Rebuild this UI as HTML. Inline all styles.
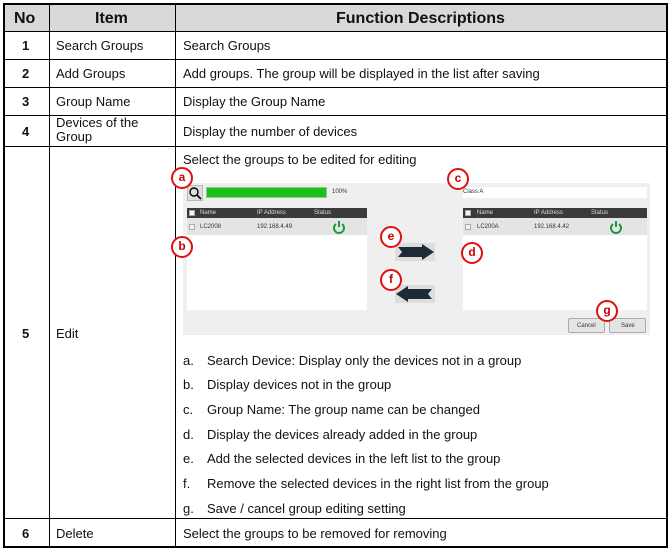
<!DOCTYPE html>
<html><head><style>
*{margin:0;padding:0;box-sizing:border-box}
body{width:672px;height:553px;background:#fff;font-family:"Liberation Sans",Arial,sans-serif;color:#111;position:relative;overflow:hidden}
.a{position:absolute}
.h{background:#000}
.t{font-size:13px;position:absolute;white-space:nowrap}
.b{font-weight:bold}
.c{position:absolute;width:22px;height:22px;border:2px solid #e01010;border-radius:50%;background:#fff;color:#c00;font-weight:bold;font-size:12px;text-align:center;line-height:17px}
.s{font-size:6px;color:#333;position:absolute;white-space:nowrap}
.k{position:absolute;width:6px;height:6px;border:1px solid #aaa;background:#f4f4f4}
</style></head><body>
<div class="a" style="left:3px;top:4px;width:665px;height:27px;background:#d9d9d9"></div>
<div class="a h" style="left:3px;top:3px;width:665px;height:2px"></div>
<div class="a h" style="left:3px;top:31px;width:665px;height:1px"></div>
<div class="a h" style="left:3px;top:59px;width:665px;height:1px"></div>
<div class="a h" style="left:3px;top:87px;width:665px;height:1px"></div>
<div class="a h" style="left:3px;top:115px;width:665px;height:1px"></div>
<div class="a h" style="left:3px;top:146px;width:665px;height:1px"></div>
<div class="a h" style="left:3px;top:518px;width:665px;height:1px"></div>
<div class="a h" style="left:3px;top:546px;width:665px;height:2px"></div>
<div class="a h" style="left:3px;top:3px;width:2px;height:545px"></div>
<div class="a h" style="left:49px;top:3px;width:1px;height:545px"></div>
<div class="a h" style="left:175px;top:3px;width:1px;height:545px"></div>
<div class="a h" style="left:666px;top:3px;width:2px;height:545px"></div>

<div class="t b" style="left:14px;top:10px;font-size:16px">No</div>
<div class="t b" style="left:95px;top:10px;font-size:16px">Item</div>
<div class="t b" style="left:336px;top:10px;font-size:16px">Function Descriptions</div>

<div class="t b" style="left:22px;top:38px">1</div>
<div class="t b" style="left:22px;top:66px">2</div>
<div class="t b" style="left:22px;top:94px">3</div>
<div class="t b" style="left:22px;top:124px">4</div>
<div class="t b" style="left:22px;top:326px">5</div>
<div class="t b" style="left:22px;top:526px">6</div>

<div class="t" style="left:56px;top:38px">Search Groups</div>
<div class="t" style="left:56px;top:66px">Add Groups</div>
<div class="t" style="left:56px;top:94px">Group Name</div>
<div class="t" style="left:56px;top:116px;line-height:14px">Devices of the<br>Group</div>
<div class="t" style="left:56px;top:326px">Edit</div>
<div class="t" style="left:56px;top:526px">Delete</div>

<div class="t" style="left:183px;top:38px">Search Groups</div>
<div class="t" style="left:183px;top:66px">Add groups. The group will be displayed in the list after saving</div>
<div class="t" style="left:183px;top:94px">Display the Group Name</div>
<div class="t" style="left:183px;top:124px">Display the number of devices</div>
<div class="t" style="left:183px;top:152px">Select the groups to be edited for editing</div>
<div class="t" style="left:183px;top:526px">Select the groups to be removed for removing</div>

<div class="a" style="left:183px;top:183px;width:467px;height:152px;background:#efefef"></div>
<div class="a" style="left:187px;top:185px;width:16px;height:16px;background:#ddd;border:1px solid #bbb"></div>
<svg class="a" style="left:188px;top:186px" width="14" height="14"><circle cx="6" cy="6" r="4" fill="none" stroke="#000" stroke-width="1.4"/><line x1="9" y1="9" x2="13" y2="13" stroke="#000" stroke-width="1.6"/></svg>
<div class="a" style="left:206px;top:187px;width:121px;height:11px;background:#1cc01c;border:1px solid #8c8"></div>
<div class="s" style="left:332px;top:189px">100%</div>
<div class="a" style="left:463px;top:187px;width:184px;height:11px;background:#fff"></div>
<div class="s" style="left:463px;top:189px">Class A</div>

<div class="a" style="left:187px;top:208px;width:180px;height:102px;background:#fff"></div>
<div class="a" style="left:187px;top:208px;width:180px;height:10px;background:#3a3a3a"></div>
<div class="a" style="left:187px;top:218px;width:180px;height:17px;background:#e4e4e4"></div>
<div class="k" style="left:189px;top:210px"></div>
<div class="k" style="left:189px;top:224px"></div>
<div class="s" style="left:200px;top:210px;color:#ddd">Name</div>
<div class="s" style="left:257px;top:210px;color:#ddd">IP Address</div>
<div class="s" style="left:314px;top:210px;color:#ddd">Status</div>
<div class="s" style="left:200px;top:224px">LC2008</div>
<div class="s" style="left:257px;top:224px">192.168.4.49</div>
<svg class="a" style="left:332px;top:220px" width="14" height="14"><path d="M4 4 A5 5 0 1 0 10 4" fill="none" stroke="#1a9a3a" stroke-width="2"/><line x1="7" y1="1" x2="7" y2="7" stroke="#1a9a3a" stroke-width="2"/></svg>

<div class="a" style="left:463px;top:208px;width:184px;height:102px;background:#fff"></div>
<div class="a" style="left:463px;top:208px;width:184px;height:10px;background:#3a3a3a"></div>
<div class="a" style="left:463px;top:218px;width:184px;height:17px;background:#e4e4e4"></div>
<div class="k" style="left:465px;top:210px"></div>
<div class="k" style="left:465px;top:224px"></div>
<div class="s" style="left:477px;top:210px;color:#ddd">Name</div>
<div class="s" style="left:534px;top:210px;color:#ddd">IP Address</div>
<div class="s" style="left:591px;top:210px;color:#ddd">Status</div>
<div class="s" style="left:477px;top:224px">LC200A</div>
<div class="s" style="left:534px;top:224px">192.168.4.42</div>
<svg class="a" style="left:609px;top:220px" width="14" height="14"><path d="M4 4 A5 5 0 1 0 10 4" fill="none" stroke="#1a9a3a" stroke-width="2"/><line x1="7" y1="1" x2="7" y2="7" stroke="#1a9a3a" stroke-width="2"/></svg>

<div class="a" style="left:395px;top:243px;width:40px;height:18px;background:#ddd"></div>
<svg class="a" style="left:396px;top:244px" width="38" height="16"><polygon points="2,3 26,3 26,0 38,8 26,16 26,13 2,13 6,8" fill="#1e2a36"/></svg>
<div class="a" style="left:395px;top:285px;width:40px;height:18px;background:#ddd"></div>
<svg class="a" style="left:396px;top:286px" width="38" height="16"><polygon points="36,3 12,3 12,0 0,8 12,16 12,13 36,13 32,8" fill="#1e2a36"/></svg>

<div class="a" style="left:568px;top:318px;width:37px;height:15px;background:#e4e4e4;border:1px solid #aaa;border-radius:2px"></div>
<div class="s" style="left:577px;top:323px">Cancel</div>
<div class="a" style="left:609px;top:318px;width:37px;height:15px;background:#e4e4e4;border:1px solid #aaa;border-radius:2px"></div>
<div class="s" style="left:621px;top:323px">Save</div>

<div class="c" style="left:171px;top:167px">a</div>
<div class="c" style="left:171px;top:236px">b</div>
<div class="c" style="left:447px;top:168px">c</div>
<div class="c" style="left:461px;top:242px">d</div>
<div class="c" style="left:380px;top:226px">e</div>
<div class="c" style="left:380px;top:269px">f</div>
<div class="c" style="left:596px;top:300px">g</div>

<div class="t" style="left:183px;top:353px">a.</div><div class="t" style="left:207px;top:353px">Search Device: Display only the devices not in a group</div>
<div class="t" style="left:183px;top:377px">b.</div><div class="t" style="left:207px;top:377px">Display devices not in the group</div>
<div class="t" style="left:183px;top:402px">c.</div><div class="t" style="left:207px;top:402px">Group Name: The group name can be changed</div>
<div class="t" style="left:183px;top:427px">d.</div><div class="t" style="left:207px;top:427px">Display the devices already added in the group</div>
<div class="t" style="left:183px;top:451px">e.</div><div class="t" style="left:207px;top:451px">Add the selected devices in the left list to the group</div>
<div class="t" style="left:183px;top:476px">f.</div><div class="t" style="left:207px;top:476px">Remove the selected devices in the right list from the group</div>
<div class="t" style="left:183px;top:501px">g.</div><div class="t" style="left:207px;top:501px">Save / cancel group editing setting</div>
</body></html>
